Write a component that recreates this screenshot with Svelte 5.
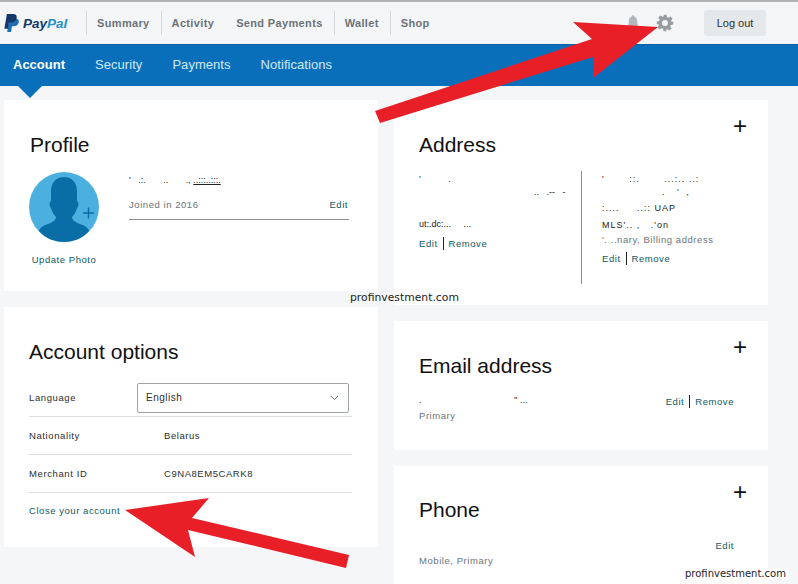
<script lang="ts">
	const navItems = [
		{ label: 'Summary', sep: true },
		{ label: 'Activity', sep: false },
		{ label: 'Send Payments', sep: true },
		{ label: 'Wallet', sep: true },
		{ label: 'Shop', sep: false }
	];
	const subItems = ['Account', 'Security', 'Payments', 'Notifications'];
</script>

<div class="page">
	<header class="top">
		<div class="logo">
			<svg width="16" height="18" viewBox="0 0 17 20">
				<path fill="#1f6fb0" d="M5 5h7c3 0 4.500 1.500 4 4.200-.6 3-2.700 4.500-5.700 4.500H8.500L7.500 20H3.200z"/>
				<path fill="#14386b" d="M2.800 0h6.500c3.400 0 5 1.700 4.400 4.500-.7 3.300-3 5-6.400 5H5L3.900 16.500H0z"/>
			</svg>
			<span class="logo-text"><i class="pay">Pay</i><i class="pal">Pal</i></span>
		</div>
		<nav class="nav">
			{#each navItems as item}
				<span class="nav-item" class:sep={item.sep}>{item.label}</span>
			{/each}
		</nav>
		<div class="top-right">
			<svg class="bell" width="12" height="18" viewBox="0 0 14 18">
				<path fill="#b4b8bb" d="M7 0c1 0 1.500.7 1.500 1.500C11 2.300 12 5 12 8c0 3 .8 4.500 2 6H0c1.200-1.500 2-3 2-6 0-3 1-5.700 3.500-6.500C5.500.7 6 0 7 0z"/>
			</svg>
			<svg class="gear" width="18" height="18" viewBox="0 0 24 24">
				<path fill="#989c9f" fill-rule="evenodd" d="M10 1h4l.6 3.200 1.900.8 2.700-1.800 2.800 2.800-1.800 2.700.8 1.900L23 10v4l-3.200.6-.8 1.900 1.800 2.700-2.800 2.800-2.700-1.800-1.900.8L14 23h-4l-.6-3.200-1.900-.8-2.700 1.800-2.800-2.800 1.800-2.700-.8-1.900L1 14v-4l3.200-.6.8-1.900-1.800-2.700 2.800-2.800 2.700 1.800 1.900-.8zM12 8a4 4 0 1 0 0 8 4 4 0 0 0 0-8z"/>
			</svg>
			<button class="logout">Log out</button>
		</div>
	</header>

	<div class="subnav">
		{#each subItems as item, i}
			<span class="sub-item" class:active={i === 0}>{item}</span>
		{/each}
	</div>

	<main class="grid">
		<div class="col">
			<section class="card profile">
				<h2>Profile</h2>
				<div class="profile-body">
					<div class="avatar-wrap">
						<svg width="70" height="70" viewBox="0 0 70 70">
							<circle cx="35" cy="35" r="35" fill="#4bb0e0"/>
							<path fill="#0a6ea6" d="M35 5c8 0 13 6 13 14v10c2 1 2 5 0 7-1 4-3 7-5 9 0 3 3 5 8 7 6 2 8 4 9 7-6 7-15 11-25 11s-19-4-25-11c1-3 3-5 9-7 5-2 8-4 8-7-2-2-4-5-5-9-2-2-2-6 0-7V19c0-8 5-14 13-14z"/>
							<path stroke="#0a6ea6" stroke-width="1.500" d="M54 41h11M59.500 35.500v11"/>
						</svg>
						<span class="link">Update Photo</span>
					</div>
					<div class="profile-info">
						<div class="specks name">' &nbsp; .:. &nbsp; &nbsp; &nbsp; .. &nbsp; &nbsp; &nbsp; ., <u>..:::..:::.</u></div>
						<div class="joined">
							<span class="muted">Joined in 2016</span>
							<span class="link">Edit</span>
						</div>
					</div>
				</div>
			</section>

			<section class="card options">
				<h2>Account options</h2>
				<div class="row lang">
					<span class="label">Language</span>
					<div class="select">
						<span>English</span>
						<svg width="9" height="6" viewBox="0 0 9 6"><path d="M1 1l3.500 3.500L8 1" fill="none" stroke="#6c7378"/></svg>
					</div>
				</div>
				<div class="row">
					<span class="label">Nationality</span>
					<span class="value">Belarus</span>
				</div>
				<div class="row">
					<span class="label">Merchant ID</span>
					<span class="value">C9NA8EM5CARK8</span>
				</div>
				<span class="link close">Close your account</span>
			</section>
		</div>

		<div class="col">
			<section class="card address">
				<span class="plus">+</span>
				<h2>Address</h2>
				<div class="addr-cols">
					<div class="addr left">
						<div class="specks line1">' &nbsp; &nbsp; &nbsp; &nbsp; &nbsp; .</div>
						<div class="specks line2">.. &nbsp; .-- &nbsp; -</div>
						<div class="specks line3">ut:.dc:... &nbsp; &nbsp; ...</div>
						<div class="actions"><span class="link">Edit</span><span class="link">Remove</span></div>
					</div>
					<div class="addr right">
						<div class="specks line1 wide">' &nbsp; &nbsp; &nbsp; ::. &nbsp; &nbsp; &nbsp; ...:.. ..:</div>
						<div class="specks line2b">. &nbsp; &nbsp; ' &nbsp; ,</div>
						<div class="specks line2c wide">:.... &nbsp; &nbsp; ..:: UAP</div>
						<div class="specks line3b wide">MLS'.. , &nbsp; .'on</div>
						<div class="muted primary">'. ..nary, Billing address</div>
						<div class="actions"><span class="link">Edit</span><span class="link">Remove</span></div>
					</div>
				</div>
			</section>

			<section class="card email">
				<span class="plus">+</span>
				<h2>Email address</h2>
				<div class="email-row">
					<div>
						<div class="specks email-line">. &nbsp; &nbsp; &nbsp; &nbsp; &nbsp; &nbsp; &nbsp; &nbsp; &nbsp; &nbsp; &nbsp; &nbsp; &nbsp; &nbsp; &nbsp; &nbsp; &nbsp; &nbsp; '' ...</div>
						<div class="muted">Primary</div>
					</div>
					<div class="actions"><span class="link">Edit</span><span class="link">Remove</span></div>
				</div>
			</section>

			<section class="card phone">
				<span class="plus">+</span>
				<h2>Phone</h2>
				<div class="phone-row">
					<span class="muted">Mobile, Primary</span>
					<span class="link">Edit</span>
				</div>
			</section>
		</div>
	</main>

	<!-- annotations pasted on top of the screenshot -->
	<svg class="arrows" width="798" height="584" viewBox="0 0 798 584">
		<polygon fill="#e81f27" points="375,111 592,39 573,22 658,27 593,78 593,57 380,123"/>
		<polygon fill="#e81f27" points="125,510 209,498 192,518 349,555 346,568 188,530 195,557"/>
	</svg>
	<span class="mark mark-mid">profinvestment.com</span>
	<span class="mark mark-end">profinvestment.com</span>
</div>

<style>
	:global(body) {
		margin: 0;
		background: #f5f6f7;
	}

	.page {
		position: relative;
		width: 798px;
		height: 584px;
		overflow: hidden;
		font-family: "Liberation Sans", Arial, sans-serif;
		background: #f5f6f7;
	}

	.top {
		display: flex;
		align-items: center;
		height: 42px;
		border-top: 2px solid #b0b2b3;
		background: #f4f5f6;
	}

	.logo {
		display: flex;
		align-items: center;
		gap: 3px;
		width: 86px;
		padding-left: 4px;
		box-sizing: border-box;
	}

	.logo-text {
		font-size: 13.500px;
		font-weight: 700;
	}

	.logo-text i {
		font-style: italic;
	}

	.pay {
		color: #14386b;
	}

	.pal {
		color: #2790c3;
	}

	.nav {
		display: flex;
		align-items: center;
		border-left: 1px solid #d6d8da;
		height: 24px;
	}

	.nav-item {
		padding: 0 11px 0 10px;
		border-right: 1px solid transparent;
		line-height: 24px;
		font-size: 11px;
		font-weight: 700;
		letter-spacing: 0.35px;
		color: #6c7378;
	}

	.nav-item.sep {
		border-right-color: #d6d8da;
	}

	.top-right {
		display: flex;
		align-items: center;
		margin-left: auto;
		margin-right: 32px;
	}

	.bell {
		margin-right: 17px;
	}

	.gear {
		margin-right: 30px;
	}

	.logout {
		width: 62px;
		height: 26px;
		border: 0;
		border-radius: 3px;
		background: #e5e8ea;
		color: #2c2e2f;
		font: 11px "Liberation Sans", Arial, sans-serif;
	}

	.subnav {
		position: relative;
		display: flex;
		align-items: center;
		gap: 30px;
		height: 42px;
		padding: 0 0 2px 13px;
		background: #0a6fbb;
		border-top: 1px solid #0a5f9c;
		box-sizing: border-box;
	}

	.subnav::after {
		content: "";
		position: absolute;
		left: 18px;
		top: 41px;
		border: 12px solid transparent;
		border-top-color: #0a6fbb;
		border-bottom: 0;
	}

	.sub-item {
		font-size: 13px;
		letter-spacing: 0.05px;
		color: #cfeaf2;
	}

	.sub-item.active {
		font-weight: 700;
		letter-spacing: 0;
		color: #fff;
	}

	.grid {
		display: grid;
		grid-template-columns: 374px 374px;
		gap: 16px;
		padding: 14px 0 0 4px;
	}

	.col {
		display: flex;
		flex-direction: column;
		gap: 16px;
	}

	.card {
		position: relative;
		background: #fff;
		box-sizing: border-box;
		padding: 33px 25px 0;
	}

	h2 {
		margin: 0;
		font-size: 21px;
		font-weight: 400;
		line-height: 24px;
		color: #111;
	}

	.link {
		font-size: 9.500px;
		letter-spacing: 0.55px;
		color: #0f5a63;
	}

	.muted {
		font-size: 9.500px;
		letter-spacing: 0.55px;
		color: #6c7378;
	}

	.specks {
		font-size: 9px;
		line-height: 11px;
		color: #222;
		white-space: nowrap;
	}

	.wide {
		letter-spacing: 1px;
	}

	.plus {
		position: absolute;
		top: 14px;
		right: 21px;
		font-size: 24px;
		line-height: 24px;
		color: #111;
	}

	.profile {
		height: 191px;
	}

	.profile h2 {
		margin-left: 1px;
	}

	.profile-body {
		display: flex;
		margin-top: 15px;
	}

	.avatar-wrap {
		display: flex;
		flex-direction: column;
		align-items: center;
		gap: 12px;
		width: 70px;
	}

	.profile-info {
		width: 220px;
		margin-left: 30px;
		padding-top: 3px;
	}

	.name {
		height: 24px;
	}

	.joined {
		display: flex;
		justify-content: space-between;
		padding: 0 1px 9px 0;
		border-bottom: 1px solid #8b8f92;
	}

	.options {
		height: 240px;
	}

	.row {
		display: flex;
		align-items: center;
		height: 38px;
		border-bottom: 1px solid #dcdfe1;
		box-sizing: border-box;
		margin-right: 1px;
	}

	.lang {
		margin-top: 13px;
		height: 40px;
	}

	.lang .label {
		padding-top: 1px;
	}

	.label {
		width: 135px;
		font-size: 9.500px;
		letter-spacing: 0.6px;
		color: #2c2e2f;
	}

	.row .value {
		font-size: 9.500px;
		letter-spacing: 0.55px;
		color: #2c2e2f;
	}

	.select {
		display: flex;
		align-items: center;
		justify-content: space-between;
		width: 212px;
		height: 30px;
		padding: 0 9px 0 8px;
		border: 1px solid #9da3a6;
		border-radius: 2px;
		box-sizing: border-box;
		margin: 2px 0 0 -27px;
		font-size: 10px;
		letter-spacing: 0.5px;
		color: #2c2e2f;
	}

	.close {
		display: block;
		margin-top: 12px;
	}

	.address {
		height: 205px;
	}

	.addr-cols {
		display: flex;
		margin-top: 14px;
	}

	.addr {
		height: 113px;
		box-sizing: border-box;
	}

	.addr.left {
		width: 163px;
		border-right: 1px solid #8b8f92;
	}

	.addr.right {
		padding-left: 20px;
	}

	.line1 {
		height: 13px;
		padding-top: 3px;
	}

	.line2 {
		height: 32px;
		padding-left: 115px;
	}

	.line3 {
		height: 13px;
	}

	.line2b {
		height: 13px;
		padding-left: 60px;
	}

	.line2c {
		height: 17px;
		padding-top: 3px;
	}

	.line3b {
		height: 14px;
	}

	.primary {
		height: 14px;
	}

	.actions {
		display: flex;
		margin-top: 4px;
		line-height: 13px;
	}

	.left .actions {
		margin-top: 5px;
	}

	.actions .link:first-child {
		padding-right: 5px;
		margin-right: 5px;
		border-right: 1px solid #222;
	}

	.email {
		height: 129px;
	}

	.email-row {
		display: flex;
		justify-content: space-between;
		align-items: flex-start;
		margin-top: 17px;
		padding-right: 9px;
	}

	.email-row .actions {
		margin-top: 0;
	}

	.email-line {
		height: 15px;
	}

	.phone {
		height: 130px;
		padding-top: 32px;
	}

	.phone-row {
		display: flex;
		justify-content: space-between;
		align-items: flex-end;
		margin-top: 18px;
		padding-right: 9px;
		height: 26px;
	}

	.phone-row .link {
		align-self: flex-start;
	}

	.arrows {
		position: absolute;
		left: 0;
		top: 0;
	}

	.mark {
		position: absolute;
		font-family: "DejaVu Sans", Verdana, sans-serif;
		color: #222;
		white-space: nowrap;
	}

	.mark-mid {
		left: 350px;
		top: 291px;
		font-size: 10.800px;
	}

	.mark-end {
		left: 683px;
		top: 568px;
		padding: 0 2px;
		font-size: 10px;
		background: #fff;
	}
</style>
